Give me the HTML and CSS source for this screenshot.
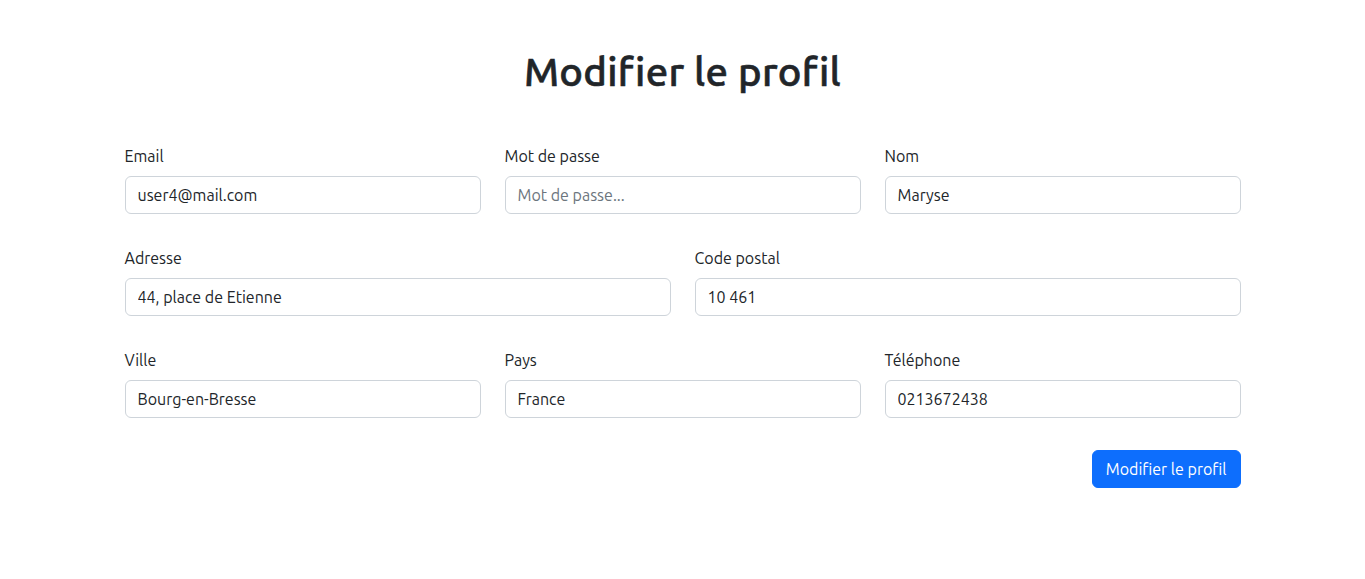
FILE: index.html
```html
<!DOCTYPE html>
<html lang="fr">
<head>
<meta charset="utf-8">
<title>Modifier le profil</title>
<link rel="stylesheet" href="styles.css">
</head>
<body>
<main class="container">
  <h1 class="title">Modifier le profil</h1>
  <form class="form">
    <div class="row row-3">
      <div class="field">
        <label class="label" for="email">Email</label>
        <input class="input" id="email" type="email" value="user4@mail.com">
      </div>
      <div class="field">
        <label class="label" for="pwd">Mot de passe</label>
        <input class="input" id="pwd" type="password" placeholder="Mot de passe...">
      </div>
      <div class="field">
        <label class="label" for="nom">Nom</label>
        <input class="input" id="nom" type="text" value="Maryse">
      </div>
    </div>
    <div class="row row-2">
      <div class="field">
        <label class="label" for="adresse">Adresse</label>
        <input class="input" id="adresse" type="text" value="44, place de Etienne">
      </div>
      <div class="field">
        <label class="label" for="cp">Code postal</label>
        <input class="input" id="cp" type="text" value="10 461">
      </div>
    </div>
    <div class="row row-3">
      <div class="field">
        <label class="label" for="ville">Ville</label>
        <input class="input" id="ville" type="text" value="Bourg-en-Bresse">
      </div>
      <div class="field">
        <label class="label" for="pays">Pays</label>
        <input class="input" id="pays" type="text" value="France">
      </div>
      <div class="field">
        <label class="label" for="tel">Téléphone</label>
        <input class="input" id="tel" type="text" value="0213672438">
      </div>
    </div>
    <div class="actions">
      <button class="btn" type="submit">Modifier le profil</button>
    </div>
  </form>
</main>
</body>
</html>
```
FILE: styles.css
```css
* { box-sizing: border-box; }
html, body { margin: 0; padding: 0; background: #fff; }
body {
  font-family: Ubuntu, "Noto Sans", "Open Sans", sans-serif;
  font-size: 16px;
  line-height: 1.5;
  color: #212529;
}
.container {
  width: 1140px;
  margin: 0 auto;
  padding: 48px 12px 0;
}
.title {
  margin: 0 0 48px;
  text-align: center;
  font-size: 40px;
  font-weight: 500;
  line-height: 1.2;
  letter-spacing: 0.3px;
  -webkit-text-stroke: 0.6px #212529;
}
.form { display: flex; flex-direction: column; gap: 32px; }
.row { display: grid; column-gap: 24px; }
.row-3 { grid-template-columns: repeat(3, 1fr); }
.row-2 { grid-template-columns: repeat(2, 1fr); }
.field { display: flex; flex-direction: column; }
.label { margin-bottom: 8px; }
.input {
  display: block;
  width: 100%;
  height: 38px;
  padding: 6px 12px;
  font: inherit;
  color: #212529;
  background: #fff;
  border: 1px solid #ced4da;
  border-radius: 6px;
  outline: none;
}
.input::placeholder { color: #6c757d; opacity: 1; }
.actions { display: flex; justify-content: flex-end; }
.btn {
  height: 38px;
  padding: 6px 13px;
  font: inherit;
  color: #fff;
  background: #0d6efd;
  border: 1px solid #0d6efd;
  border-radius: 6px;
  cursor: pointer;
}
```
